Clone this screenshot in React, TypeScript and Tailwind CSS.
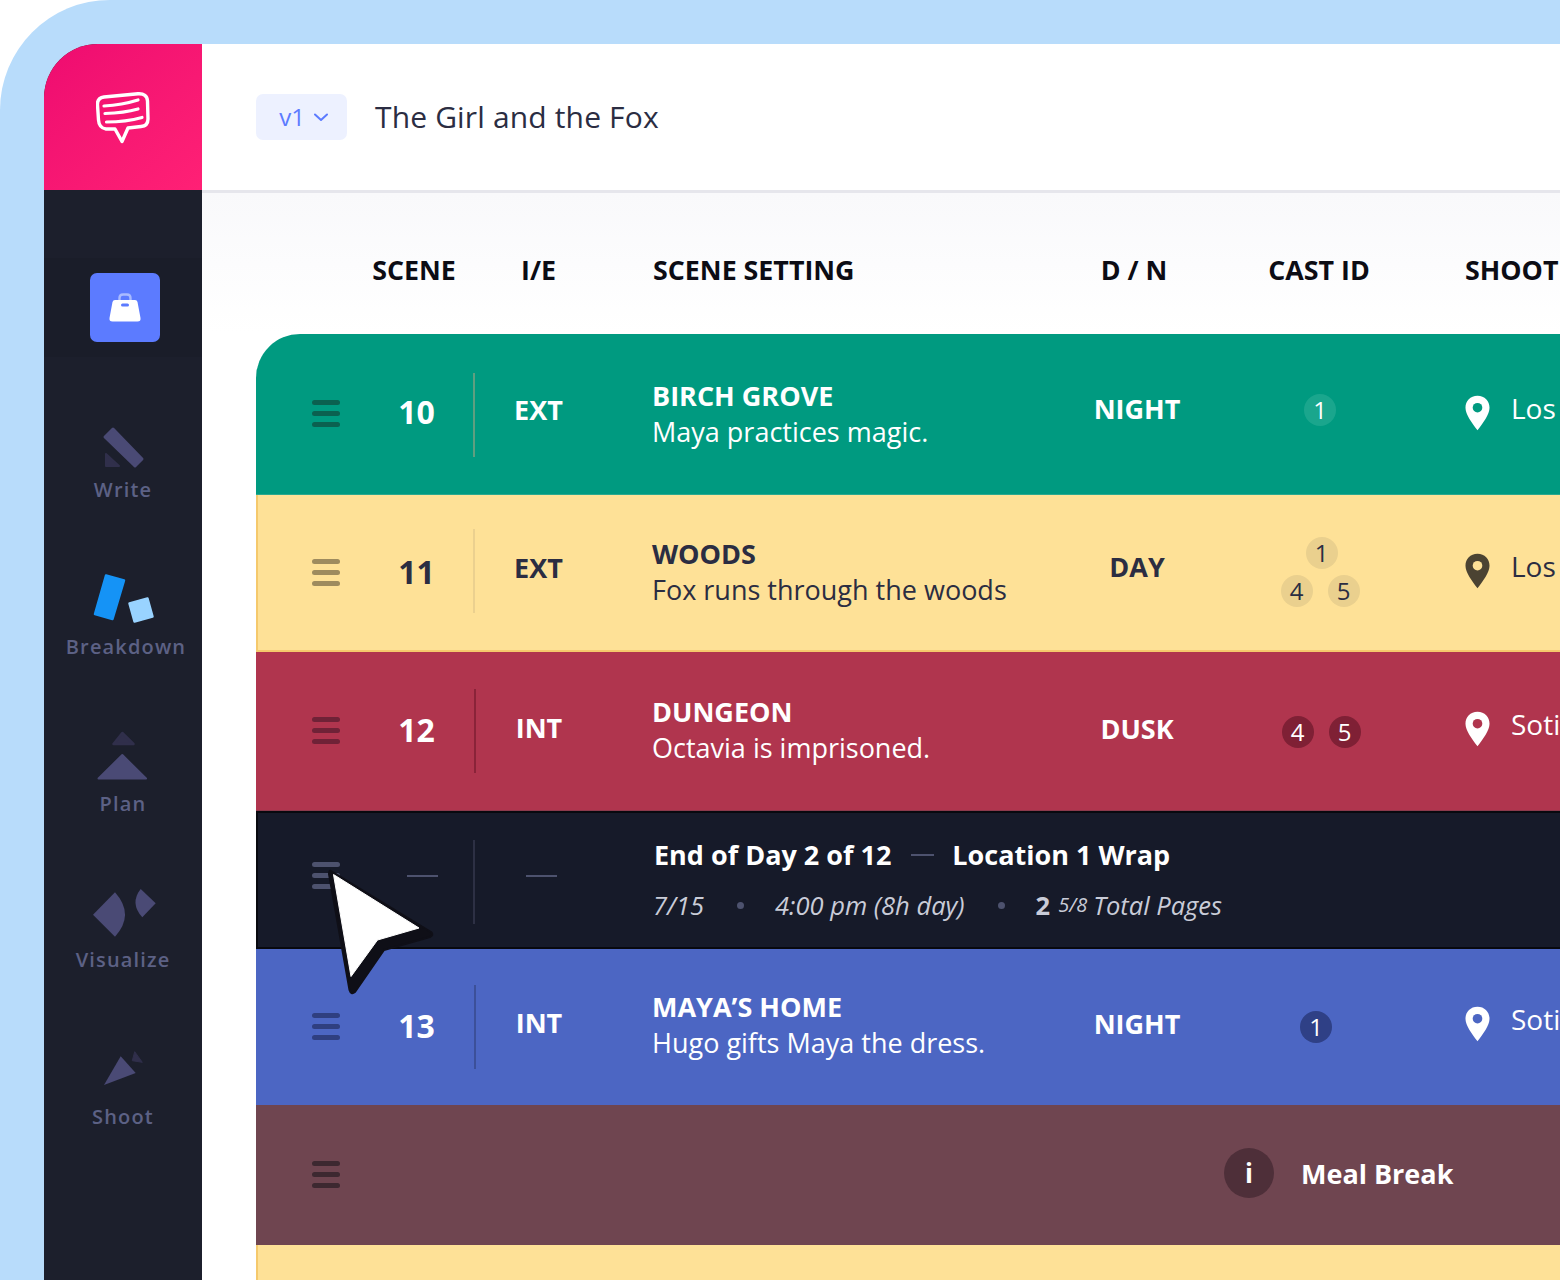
import type { ReactNode } from 'react'

const GRID = 'grid grid-cols-[104px_113px_131px_463px_140px_226px_1fr] items-center'

function Logo() {
  return (
    <svg width="54" height="52" viewBox="0 0 54 52" fill="none" stroke="white" strokeLinecap="round" strokeLinejoin="round">
      <path strokeWidth="3.400" d="M8 5 L42 1.800 Q51 1.200 51.500 9 L52 27 Q52 34 45 34.500 L32 36 L26 49.500 L19 37 L10 37 Q3 36 2.500 28 L1.500 13 Q1 6 8 5 Z" />
      <path strokeWidth="3.200" d="M8 14 Q26 13 42 8 M9 21.500 Q28 21 42 17 M10.500 30 Q30 30 46 25.500" />
    </svg>
  )
}

function Bag() {
  return (
    <svg width="32" height="30" viewBox="0 0 32 30">
      <path d="M10.500 8 V5 Q10.500 1.500 14 1.500 H18 Q21.500 1.500 21.500 5 V8" fill="none" stroke="#a9bbff" strokeWidth="2.400" />
      <path d="M6 7 H26 Q28 7 28.500 9 L31.500 25 Q32 28.500 28.500 28.500 H3.500 Q0 28.500 0.500 25 L3.500 9 Q4 7 6 7 Z" fill="white" />
      <rect x="12" y="10.500" width="8" height="3" rx="1.500" fill="#5c7bff" />
    </svg>
  )
}

function NavItem({ label, shift, children }: { label: string; shift?: boolean; children: ReactNode }) {
  return (
    <div className="h-[156.750px] flex flex-col items-center">
      <svg width="80" height="60" viewBox="0 0 80 60" strokeLinejoin="round">
        {children}
      </svg>
      <div className={`mt-[7px] text-[20px] leading-[22px] font-semibold tracking-[1.150px] text-[#5c6185] ${shift ? 'ml-[6px]' : ''}`}>
        {label}
      </div>
    </div>
  )
}

function Sidebar() {
  return (
    <div className="w-[158px] shrink-0 bg-[#1c1f2c]">
      <div className="h-[146px] flex items-center justify-center bg-gradient-to-br from-[#ee0b70] to-[#ff2075]">
        <div className="mt-[2px]">
          <Logo />
        </div>
      </div>
      <div className="mt-[68px] h-[99px] bg-[#1a1d29] flex items-center justify-center">
        <div className="ml-[4px] w-[70px] h-[69px] rounded-[7px] bg-[#5c7bff] flex items-center justify-center">
          <Bag />
        </div>
      </div>
      <div className="pt-[55px]">
        <NavItem label="Write">
          <polygon points="30,17 59,47 52,54 22,25" fill="#4a4a75" stroke="#4a4a75" strokeWidth="3" />
          <polygon points="23,42 23,54 36,54" fill="#302f4b" stroke="#302f4b" strokeWidth="2" />
        </NavItem>
        <NavItem label="Breakdown" shift>
          <polygon points="23,6.500 41,11.500 29.500,50 12,45" fill="#1593f6" stroke="#1593f6" strokeWidth="2.500" />
          <polygon points="46.500,34.500 64.500,29.500 69.500,47.500 51.500,52.500" fill="#99d3ff" stroke="#99d3ff" strokeWidth="2.500" />
        </NavItem>
        <NavItem label="Plan">
          <polygon points="39.300,7 50.500,18 30.500,18" fill="#302f4b" stroke="#302f4b" strokeWidth="2.500" />
          <polygon points="39.300,29 63,52.500 15.500,52.500" fill="#4a4a75" stroke="#4a4a75" strokeWidth="2" />
        </NavItem>
        <NavItem label="Visualize">
          <path d="M32 10.300 L10 32.700 L32 54.700 Q52 32.700 32 10.300 Z" fill="#4a4a75" />
          <path d="M57.700 7 L72.700 21.300 L59.300 35.300 Q46.500 21.300 57.700 7 Z" fill="#4a4a75" />
        </NavItem>
        <NavItem label="Shoot">
          <polygon points="37.700,17.300 52.700,34 21,46" fill="#4a4a75" />
          <polygon points="51.700,12.700 59.300,23.300 49.300,21.700" fill="#302f4b" stroke="#302f4b" strokeWidth="1" />
        </NavItem>
      </div>
    </div>
  )
}

function Handle({ color, className }: { color: string; className?: string }) {
  return (
    <div className={`ml-[56px] w-[28px] flex flex-col gap-[6px] ${className ?? '-mt-[2px]'}`}>
      <div className={`h-[5px] rounded-full ${color}`} />
      <div className={`h-[5px] rounded-full ${color}`} />
      <div className={`h-[5px] rounded-full ${color}`} />
    </div>
  )
}

function Pin({ fill, hole }: { fill: string; hole: string }) {
  return (
    <svg width="25" height="36" viewBox="0 0 26 37">
      <path d="M13 0.500 C5.500 0.500 0.500 6 0.500 13 C0.500 20 7 28.500 13 36.500 C19 28.500 25.500 20 25.500 13 C25.500 6 20.500 0.500 13 0.500 Z" fill={fill} />
      <circle cx="13" cy="13" r="5" fill={hole} />
    </svg>
  )
}

function Badge({ n, color }: { n: number; color: string }) {
  return (
    <div className={`w-[32px] h-[32px] rounded-full flex items-center justify-center text-[24px] leading-none ${color}`}>
      {n}
    </div>
  )
}

type Row = {
  scene: number
  ie: string
  title: string
  sub: string
  dn: string
  cast: number[][]
  place: string
  height: string
  shell: string
  text: string
  handle: string
  divider: string
  badge: string
  pinFill: string
  pinHole: string
  numClass: string
  dividerClass: string
  ieClass: string
  copyClass: string
  dnClass: string
  castClass: string
  placeClass: string
}

const rows: Row[] = [
  {
    scene: 10, ie: 'EXT', title: 'BIRCH GROVE', sub: 'Maya practices magic.', dn: 'NIGHT', cast: [[1]], place: 'Los',
    height: 'h-[161px] rounded-tl-[44px] shadow-[inset_0_-1px_0_#2ba88f]', shell: 'bg-[#009a80]', text: 'text-white',
    handle: 'bg-[#0b6150]', divider: 'border-[#5f9f80]', badge: 'bg-[#1aa68d] text-white', pinFill: 'white', pinHole: '#009a80',
    numClass: '-mt-[5px]', dividerClass: '', ieClass: '-mt-[9px]', copyClass: '-mt-[1px]', dnClass: '-mt-[10px]', castClass: '-mt-[9px]', placeClass: '-mt-[4px]',
  },
  {
    scene: 11, ie: 'EXT', title: 'WOODS', sub: 'Fox runs through the woods', dn: 'DAY', cast: [[1], [4, 5]], place: 'Los',
    height: 'h-[157px] shadow-[inset_2px_-2px_0_#f5c96c]', shell: 'bg-[#fee197]', text: 'text-[#2b2d42]',
    handle: 'bg-[#9e8b5e]', divider: 'border-[#ebd08f]', badge: 'bg-[#ead08e] text-[#2b2d42]', pinFill: '#4b4332', pinHole: '#fee197',
    numClass: '-mt-[3px]', dividerClass: '-mt-[6px]', ieClass: '-mt-[5px]', copyClass: '-mt-[3px]', dnClass: '-mt-[13px]', castClass: '-mt-[4px]', placeClass: '-mt-[6px]',
  },
  {
    scene: 12, ie: 'INT', title: 'DUNGEON', sub: 'Octavia is imprisoned.', dn: 'DUSK', cast: [[4, 5]], place: 'Soti',
    height: 'h-[159px] shadow-[inset_0_-1px_0_#8c3a4c]', shell: 'bg-[#b0354e]', text: 'text-white',
    handle: 'bg-[#6f2237]', divider: 'border-[#8a2339] ml-[1px]', badge: 'bg-[#7f2035] text-white', pinFill: 'white', pinHole: '#b0354e',
    numClass: '-mt-[3px]', dividerClass: '-mt-[2px]', ieClass: '-mt-[5px]', copyClass: '-mt-[3px]', dnClass: '-mt-[5px]', castClass: 'mt-[1px] ml-[2px]', placeClass: '-mt-[5px]',
  },
]

const blueRow: Row = {
  scene: 13, ie: 'INT', title: 'MAYA’S HOME', sub: 'Hugo gifts Maya the dress.', dn: 'NIGHT', cast: [[1]], place: 'Soti',
  height: 'h-[156px]', shell: 'bg-[#4c66c3]', text: 'text-white',
  handle: 'bg-[#2f3f80]', divider: 'border-[#3c5099] ml-[1px]', badge: 'bg-[#2f4086] text-white', pinFill: 'white', pinHole: '#4c66c3',
  numClass: '-mt-[3px]', dividerClass: '-mt-[1px]', ieClass: '-mt-[7px]', copyClass: '-mt-[5px]', dnClass: '-mt-[6px]', castClass: 'mr-[8px]', placeClass: '-mt-[6px]',
}

function SceneRow({ row }: { row: Row }) {
  return (
    <div className={`${GRID} ${row.height} ${row.shell} ${row.text}`}>
      <Handle color={row.handle} />
      <div className={`text-center text-[32px] leading-none font-bold ${row.numClass}`}>{row.scene}</div>
      <div className={`h-[84px] border-l-2 flex items-center justify-center text-[27px] font-bold pr-[2px] ${row.divider} ${row.dividerClass}`}>
        <span className={row.ieClass}>{row.ie}</span>
      </div>
      <div className={`pl-[48px] ${row.copyClass}`}>
        <div className="text-[27px] leading-[36px] font-bold">{row.title}</div>
        <div className="text-[27px] leading-[36px]">{row.sub}</div>
      </div>
      <div className={`text-center text-[27px] font-bold ${row.dnClass}`}>{row.dn}</div>
      <div className={`flex flex-col items-center gap-[6px] ${row.castClass}`}>
        {row.cast.map((line, i) => (
          <div key={i} className={`flex gap-[15px] ${row.cast.length > 1 && i === 0 ? 'ml-[3px]' : ''}`}>
            {line.map(n => <Badge key={n} n={n} color={row.badge} />)}
          </div>
        ))}
      </div>
      <div className={`pl-[32px] flex items-start gap-[21px] ${row.placeClass}`}>
        <Pin fill={row.pinFill} hole={row.pinHole} />
        <span className="-mt-[1px] text-[28px] leading-[28px]">{row.place}</span>
      </div>
    </div>
  )
}

function DayRow() {
  return (
    <div className={`${GRID} h-[138px] bg-[#161a29] shadow-[inset_2px_2px_0_#08090f,inset_0_-2px_0_#08090f] text-white`}>
      <Handle color="bg-[#4d526e]" className="-mt-[10px]" />
      <div className="flex justify-center -mt-[8px]">
        <div className="ml-[12px] w-[31px] h-[2px] bg-[#4d526e]" />
      </div>
      <div className="mt-[4px] h-[84px] border-l-2 border-[#2d3044] flex items-center justify-center">
        <div className="ml-[4px] -mt-[12px] w-[31px] h-[2px] bg-[#4d526e]" />
      </div>
      <div className="col-span-4 pl-[49px]">
        <div className="ml-[1px] flex items-center text-[27px] leading-[36px] font-bold">
          <span>End of Day 2 of 12</span>
          <span className="ml-[20px] mr-[18px] w-[23px] h-[2px] bg-[#4d526e]" />
          <span>Location 1 Wrap</span>
        </div>
        <div className="mt-[14px] flex items-center text-[25.500px] leading-[36px] italic text-[#c9ccd8]">
          <span>7/15</span>
          <span className="ml-[33px] mr-[31px] w-[7px] h-[7px] rounded-full bg-[#4d526e]" />
          <span>4:00 pm (8h day)</span>
          <span className="ml-[33px] mr-[31px] w-[7px] h-[7px] rounded-full bg-[#4d526e]" />
          <span className="not-italic font-bold mr-[8px]">2</span>
          <span className="text-[20px] mr-[6px]">5/8</span>
          <span>Total Pages</span>
        </div>
      </div>
    </div>
  )
}

function MealRow() {
  return (
    <div className="h-[140px] bg-[#6f4550] flex items-center text-white">
      <Handle color="bg-[#3d2830]" />
      <div className="ml-[884px] -mt-[4px] w-[50px] h-[50px] rounded-full bg-[#4e2f39] flex items-center justify-center text-[26px] font-bold">
        i
      </div>
      <div className="ml-[27px] -mt-[2px] text-[27px] font-bold whitespace-nowrap">Meal Break</div>
    </div>
  )
}

function Cursor() {
  return (
    <svg className="absolute left-[320px] top-[860px]" width="125" height="145" viewBox="320 860 125 145">
      <path d="M331 871 L431 932 Q434 935 430 937 L384 950 L355 992 Q351 995 349.500 990 L329 874 Q329 870 331 871 Z" fill="#0f0f17" stroke="#0f0f17" strokeWidth="2" strokeLinejoin="round" />
      <path d="M333.500 874.500 L419 928 L377.500 940 L351 976.500 Z" fill="white" stroke="white" strokeWidth="1" strokeLinejoin="round" />
    </svg>
  )
}

export default function App() {
  return (
    <div className="relative w-[1560px] h-[1280px] overflow-hidden bg-white font-['Open_Sans',sans-serif]">
      <div className="h-full rounded-tl-[110px] bg-[#b8dcfb] pl-[44px] pt-[44px]">
        <div className="h-full flex rounded-tl-[54px] overflow-hidden bg-white">
          <Sidebar />
          <div className="flex-1 min-w-0">
            <div className="h-[149px] border-b-[3px] border-[#e6e6ec] flex items-center pl-[54px]">
              <div className="w-[91px] h-[46px] rounded-[7px] bg-[#edf1ff] flex items-center justify-center gap-[9px] pl-[4px] text-[24px] text-[#5c7bff]">
                <span>v1</span>
                <svg width="14" height="9" viewBox="0 0 14 9" fill="none" stroke="#5c7bff" strokeWidth="2" strokeLinecap="round" strokeLinejoin="round">
                  <path d="M1 1.500 L7 7 L13 1.500" />
                </svg>
              </div>
              <div className="ml-[28px] -mt-[2px] text-[30px] tracking-[0.150px] font-medium text-[#2b2d42]">The Girl and the Fox</div>
            </div>
            <div className="bg-gradient-to-b from-[#f9f9fb] to-white">
              <div className="pl-[54px] h-[141px]">
                <div className={`${GRID} h-[155px] text-[26.800px] font-bold text-[#0c0c14] whitespace-nowrap`}>
                  <div />
                  <div className="text-center -ml-[5px]">SCENE</div>
                  <div className="text-center">I/E</div>
                  <div className="pl-[49px]">SCENE SETTING</div>
                  <div className="text-center -ml-[6px]">D / N</div>
                  <div className="text-center -ml-[2px]">CAST ID</div>
                  <div className="pl-[32px]">SHOOT</div>
                </div>
              </div>
            </div>
            <div className="pl-[54px]">
              {rows.map(row => <SceneRow key={row.scene} row={row} />)}
              <DayRow />
              <SceneRow row={blueRow} />
              <MealRow />
              <div className="h-[40px] bg-[#fee197] shadow-[inset_2px_0_0_#f5c96c]" />
            </div>
          </div>
        </div>
      </div>
      <Cursor />
    </div>
  )
}
